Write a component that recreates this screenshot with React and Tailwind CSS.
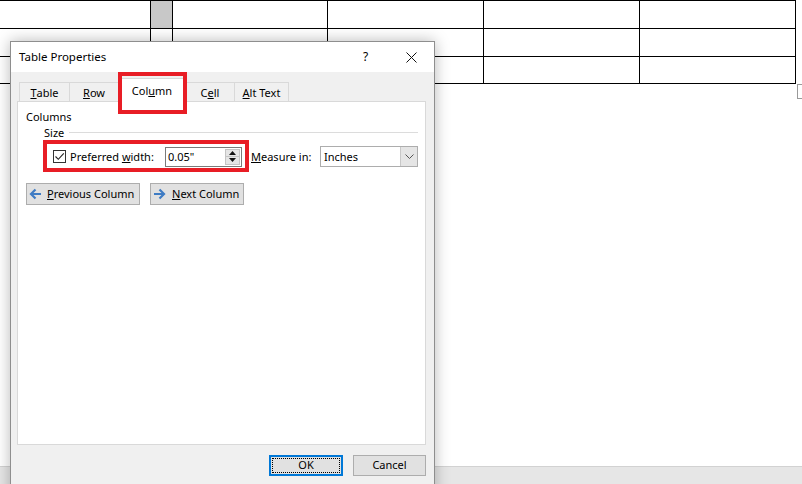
import React from 'react';

const F = "font-['Noto_Sans',sans-serif]";

function ArrowIcon({ dir }) {
    // blue bold arrow used on the column navigation buttons
    const d = dir === 'left' ? 'M13 7H3 M7.5 2.5L3 7l4.5 4.5' : 'M1 7h10 M6.5 2.5L11 7l-4.5 4.5';
    return (
        <svg width="14" height="14" viewBox="0 0 14 14" className="shrink-0">
            <path d={d} fill="none" stroke="#3f7cc4" strokeWidth="2.2" strokeLinecap="butt" strokeLinejoin="miter" />
        </svg>
    );
}

function Tab({ children, w }) {
    return (
        <div className={`${w} h-[19px] flex items-center justify-center border-t border-r border-[#d9d9d9] first:border-l bg-[#f0f0f0] text-[11px] leading-none whitespace-nowrap`}>
            {children}
        </div>
    );
}

function NavButton({ dir, w, children }) {
    return (
        <div className={`${w} h-[22px] flex items-center bg-[#e1e1e1] border border-[#adadad] text-[11px] whitespace-nowrap ${dir === 'left' ? 'pl-[1px]' : 'pl-[2px]'}`}>
            <ArrowIcon dir={dir} />
            <span className={dir === 'left' ? 'ml-[5px]' : 'ml-[5px]'}>{children}</span>
        </div>
    );
}

export default function App() {
    const cols = ['w-[151px]', 'w-[22px]', 'w-[155px]', 'w-[156px]', 'w-[156px]', 'w-[156px]'];
    const rows = ['h-[28px]', 'h-[28px]', 'h-[27px]'];

    return (
        <div className={`relative w-[802px] h-[484px] overflow-hidden bg-white text-black ${F}`}>
            <div className="flex flex-col h-full">
                {/* document area with the table */}
                <div className="flex-1">
                    <div className="flex flex-col border-t border-black w-[796px]">
                        {rows.map((rh, r) => (
                            <div key={r} className={`flex ${rh}`}>
                                {cols.map((cw, c) => (
                                    <div key={c} className={`${cw} shrink-0 border-r border-b border-black ${r === 0 && c === 1 ? 'bg-[#c8c8c8]' : ''}`} />
                                ))}
                            </div>
                        ))}
                    </div>
                    <div className="ml-[797px] w-[5px] h-[15px] border-l border-t border-b border-[#9a9a9a]" />
                </div>
                {/* status bar */}
                <div className="h-[18px] bg-[#e6e6e6] border-t border-[#d2d2d2]" />
            </div>

            {/* Table Properties dialog */}
            <div className="absolute left-[10px] top-[41px] w-[425px] h-[460px] border border-[#8e8e8e] bg-[#f0f0f0] shadow-[0_0_14px_rgba(0,0,0,0.28)] flex flex-col">
                <div className="h-[30px] bg-white flex items-center shrink-0">
                    <span className="pl-[8px] text-[11.5px]">Table Properties</span>
                    <div className="ml-auto flex h-full">
                        <div className="w-[45px] flex items-center justify-center text-[12px]">?</div>
                        <div className="w-[46px] flex items-center justify-center">
                            <svg width="11" height="11" viewBox="0 0 11 11">
                                <path d="M0.5 0.5l10 10M10.5 0.5l-10 10" stroke="#111" strokeWidth="1" fill="none" />
                            </svg>
                        </div>
                    </div>
                </div>

                <div className="pl-[6px] pr-[8px] flex flex-col">
                    {/* tabs */}
                    <div className="h-[29px] flex items-end pl-[2px] relative z-10">
                        <Tab w="w-[51px]"><u>T</u>able</Tab>
                        <Tab w="w-[49px]"><u>R</u>ow</Tab>
                        <div className="relative w-[68px] h-[24px] -mb-px -ml-[1px] flex items-center justify-center bg-white border border-b-0 border-[#d9d9d9] text-[11px] leading-none">
                            Col<u>u</u>mn
                            <div className="absolute -left-[1px] -top-[7px] -right-[2px] -bottom-[12px] border-4 border-[#e81d25]" />
                        </div>
                        <div className="w-[49px] h-[19px] flex items-center justify-center border-t border-r border-[#d9d9d9] bg-[#f0f0f0] text-[11px] leading-none">C<u>e</u>ll</div>
                        <div className="w-[54px] h-[19px] flex items-center justify-center border-t border-r border-[#d9d9d9] bg-[#f0f0f0] text-[11px] leading-none whitespace-nowrap"><u>A</u>lt Text</div>
                    </div>

                    {/* panel */}
                    <div className="h-[344px] bg-white border border-[#d9d9d9] flex flex-col text-[11px] leading-[16px]">
                        <div className="pl-[8px] mt-[7px]">Columns</div>
                        <div className="flex items-center pl-[26px] pr-[7px]">
                            <span>Size</span>
                            <div className="flex-1 ml-[5px] h-px bg-[#dcdcdc] -mt-[2px]" />
                        </div>

                        <div className="relative flex items-center h-[21px] mt-[5px] pl-[35px]">
                            <div className="w-[13px] h-[13px] border border-[#333] bg-white flex items-center justify-center">
                                <svg width="11" height="11" viewBox="0 0 11 11">
                                    <path d="M1.5 5.5l2.8 2.8L9.8 2.3" fill="none" stroke="#222" strokeWidth="1.1" />
                                </svg>
                            </div>
                            <span className="w-[99px] pl-[4px] whitespace-nowrap">Preferred <u>w</u>idth:</span>
                            <div className="w-[77px] h-[20px] border border-[#7a7a7a] bg-white flex items-center">
                                <span className="pl-[2px] flex-1">0.05"</span>
                                <div className="w-[16px] h-full flex flex-col py-[1px] pr-[1px]">
                                    <div className="flex-1 bg-[#e5e5e5] border border-[#c4c4c4] flex items-center justify-center">
                                        <svg width="7" height="4" viewBox="0 0 7 4"><path d="M3.5 0L7 4H0z" fill="#111" /></svg>
                                    </div>
                                    <div className="flex-1 bg-[#e5e5e5] border border-t-0 border-[#c4c4c4] flex items-center justify-center">
                                        <svg width="7" height="4" viewBox="0 0 7 4"><path d="M0 0h7L3.5 4z" fill="#111" /></svg>
                                    </div>
                                </div>
                            </div>
                            <span className="w-[78px] pl-[9px] whitespace-nowrap"><u>M</u>easure in:</span>
                            <div className="w-[98px] h-[21px] border border-[#adadad] bg-white flex items-center">
                                <span className="pl-[3px] flex-1">Inches</span>
                                <div className="w-[17px] h-full bg-[#e5e5e5] border-l border-[#c8c8c8] flex items-center justify-center">
                                    <svg width="9" height="5" viewBox="0 0 9 5"><path d="M0.5 0.5l4 4 4-4" fill="none" stroke="#555" strokeWidth="1" /></svg>
                                </div>
                            </div>
                            <div className="absolute left-[25px] -top-[6px] w-[206px] h-[32px] border-4 border-[#e81d25]" />
                        </div>

                        <div className="flex gap-[10px] pl-[8px] mt-[16px]">
                            <NavButton dir="left" w="w-[114px]"><u>P</u>revious Column</NavButton>
                            <NavButton dir="right" w="w-[94px]"><u>N</u>ext Column</NavButton>
                        </div>
                    </div>

                    {/* dialog buttons */}
                    <div className="flex justify-end gap-[10px] mt-[10px] text-[11px]">
                        <div className="w-[74px] h-[21px] border-2 border-[#0078d7] bg-[#e1e1e1] p-[1px]">
                            <div className="w-full h-full border border-dotted border-black flex items-center justify-center">OK</div>
                        </div>
                        <div className="w-[73px] h-[21px] border border-[#adadad] bg-[#e1e1e1] flex items-center justify-center">Cancel</div>
                    </div>
                </div>
            </div>
        </div>
    );
}
